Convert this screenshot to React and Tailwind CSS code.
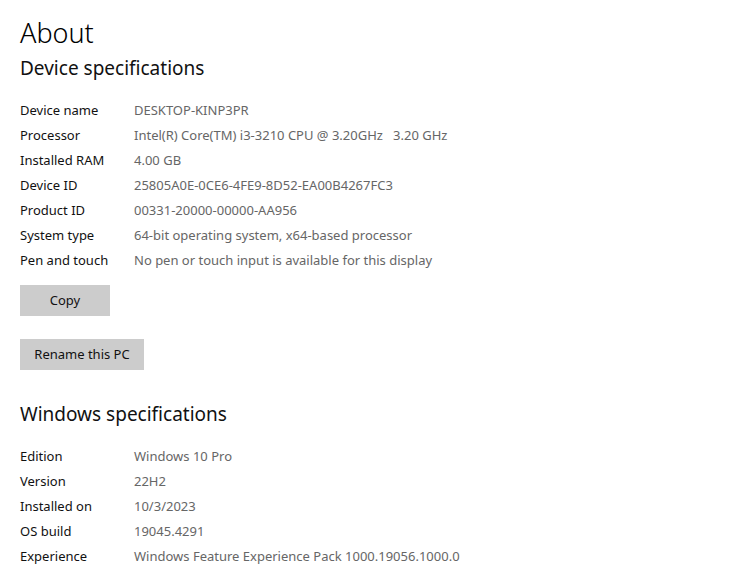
const device = [
  ['Device name', 'DESKTOP-KINP3PR'],
  ['Processor', 'Intel(R) Core(TM) i3-3210 CPU @ 3.20GHz   3.20 GHz'],
  ['Installed RAM', '4.00 GB'],
  ['Device ID', '25805A0E-0CE6-4FE9-8D52-EA00B4267FC3'],
  ['Product ID', '00331-20000-00000-AA956'],
  ['System type', '64-bit operating system, x64-based processor'],
  ['Pen and touch', 'No pen or touch input is available for this display'],
];

const windows = [
  ['Edition', 'Windows 10 Pro'],
  ['Version', '22H2'],
  ['Installed on', '10/3/2023'],
  ['OS build', '19045.4291'],
  ['Experience', 'Windows Feature Experience Pack 1000.19056.1000.0'],
];

function SpecRows({ rows }) {
  return (
    <div className="flex flex-col">
      {rows.map(([label, value]) => (
        <div key={label} className="flex h-[25px] items-center text-[13px] leading-[25px]">
          <div className="w-[114px] shrink-0 text-[#111111]">{label}</div>
          <div className="whitespace-pre text-[#666666]">{value}</div>
        </div>
      ))}
    </div>
  );
}

export default function App() {
  return (
    <div
      className="min-h-[578px] w-[732px] bg-white px-5 pt-[15px] text-black"
      style={{ fontFamily: '"Noto Sans", "Open Sans", sans-serif' }}
    >
      <h1 className="text-[27px] font-light leading-[36px]">About</h1>
      <h2 className="mt-[3px] text-[19px] leading-[28px] text-[#111111]">Device specifications</h2>

      <div className="mt-[16px]">
        <SpecRows rows={device} />
      </div>

      <div className="mt-[12px] flex flex-col items-start gap-[23px]">
        <button className="h-[31px] w-[90px] bg-[#cccccc] text-[13px] text-[#111111]">Copy</button>
        <button className="h-[31px] w-[124px] bg-[#cccccc] text-[13px] text-[#111111]">Rename this PC</button>
      </div>

      <h2 className="mt-[30px] text-[19px] leading-[28px] text-[#111111]">Windows specifications</h2>
      <div className="mt-[16px]">
        <SpecRows rows={windows} />
      </div>
    </div>
  );
}
